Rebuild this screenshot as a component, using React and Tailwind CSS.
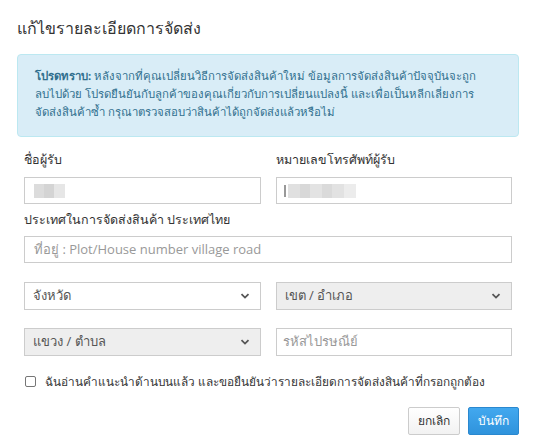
import React from "react";

function Chevron() {
  return (
    <svg width="10" height="10" viewBox="0 0 10 10" className="pointer-events-none absolute right-[10px] top-1/2 -translate-y-1/2">
      <path d="M1.5 3.2 L5 6.6 L8.5 3.2" fill="none" stroke="#555" strokeWidth="1.8" />
    </svg>
  );
}

function Select({ label, disabled }) {
  return (
    <div className={`relative h-[28px] border border-[#ccc] ${disabled ? "bg-[#eee]" : "bg-white"} flex items-center pl-[8px] text-[13px] text-[#555]`}>
      <span>{label}</span>
      <Chevron />
    </div>
  );
}

export default function App() {
  return (
    <div
      className="w-[536px] h-[447px] overflow-hidden bg-white px-[17px] text-[#333]"
      style={{ fontFamily: '"Open Sans", "Noto Sans", Tahoma, sans-serif' }}
    >
      <h1 className="pt-[16px] h-[54px] text-[16px] leading-[24px] text-[#333]">แก้ไขรายละเอียดการจัดส่ง</h1>

      <div className="h-[83px] rounded-[4px] border border-[#bce8f1] bg-[#d9edf7] px-[17px] pt-[12px] text-[11.4px] leading-[18px] text-[#31708f] whitespace-nowrap">
        <div><b>โปรดทราบ:</b> หลังจากที่คุณเปลี่ยนวิธีการจัดส่งสินค้าใหม่ ข้อมูลการจัดส่งสินค้าปัจจุบันจะถูก</div>
        <div>ลบไปด้วย โปรดยืนยันกับลูกค้าของคุณเกี่ยวกับการเปลี่ยนแปลงนี้ และเพื่อเป็นหลีกเลี่ยงการ</div>
        <div>จัดส่งสินค้าซ้ำ กรุณาตรวจสอบว่าสินค้าได้ถูกจัดส่งแล้วหรือไม่</div>
      </div>

      <div className="px-[7px]">
        <div className="mt-[13px] grid grid-cols-2 gap-x-[15px]">
          <div>
            <div className="h-[27px] text-[12.5px] leading-[20px]">ชื่อผู้รับ</div>
            <div className="h-[27px] border border-[#ccc] flex items-center pl-[9px]">
              <div className="flex">
                <div className="h-[14px] w-[10px] bg-[#dcdcdc]" />
                <div className="h-[14px] w-[10px] bg-[#d4d4d4]" />
                <div className="h-[14px] w-[11px] bg-[#e6e6e6]" />
              </div>
            </div>
          </div>
          <div>
            <div className="h-[27px] text-[12.5px] leading-[20px]">หมายเลขโทรศัพท์ผู้รับ</div>
            <div className="h-[27px] border border-[#ccc] flex items-center pl-[7px]">
              <div className="flex items-center">
                <div className="h-[12px] w-[2px] bg-[#999] mr-[2px]" />
                <div className="h-[14px] w-[12px] bg-[#e0e0e0]" />
                <div className="h-[14px] w-[10px] bg-[#d8d8d8]" />
                <div className="h-[14px] w-[12px] bg-[#e3e3e3]" />
                <div className="h-[14px] w-[10px] bg-[#dadada]" />
                <div className="h-[14px] w-[12px] bg-[#e2e2e2]" />
                <div className="h-[14px] w-[12px] bg-[#ececec]" />
              </div>
            </div>
          </div>
        </div>

        <div className="mt-[5px] h-[27px] text-[12.5px] leading-[22px]">ประเทศในการจัดส่งสินค้า ประเทศไทย</div>
        <div className="h-[27px] border border-[#ccc] flex items-center pl-[9px] text-[13px] text-[#999]">
          ที่อยู่ : Plot/House number village road
        </div>

        <div className="mt-[19px] grid grid-cols-2 gap-x-[15px] gap-y-[18px]">
          <Select label="จังหวัด" />
          <Select label="เขต / อำเภอ" disabled />
          <Select label="แขวง / ตำบล" disabled />
          <div className="h-[28px] border border-[#ccc] flex items-center pl-[6px] text-[13px] text-[#999]">รหัสไปรษณีย์</div>
        </div>

        <div className="mt-[17px] flex items-center text-[11.8px] whitespace-nowrap">
          <div className="ml-[1px] h-[11px] w-[11px] rounded-[2px] border border-[#767676] bg-white" />
          <span className="ml-[9px]">ฉันอ่านคำแนะนำด้านบนแล้ว และขอยืนยันว่ารายละเอียดการจัดส่งสินค้าที่กรอกถูกต้อง</span>
        </div>
      </div>

      <div className="mt-[16px] flex justify-end gap-[8px]">
        <button className="h-[28px] w-[52px] rounded-[2px] border border-[#ccc] bg-gradient-to-b from-white to-[#f2f2f2] text-[12px] text-[#333]">ยกเลิก</button>
        <button className="h-[28px] w-[51px] rounded-[2px] border border-[#2a88cf] bg-gradient-to-b from-[#42a8ef] to-[#2f93dc] text-[12px] text-white">บันทึก</button>
      </div>
    </div>
  );
}
